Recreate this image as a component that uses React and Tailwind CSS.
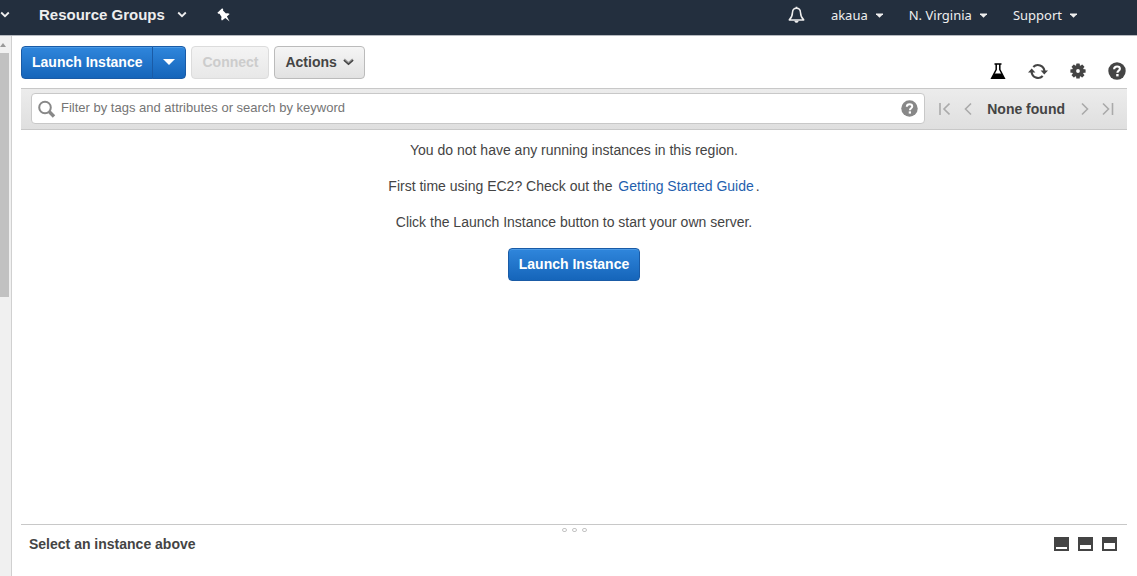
import React from "react";

function Caret({ className = "" }) {
  return (
    <svg className={className} width="7" height="5" viewBox="0 0 7 5" fill="currentColor" aria-hidden="true">
      <path d="M0 .5h7v.8L3.500 4.800 0 1.300z" />
    </svg>
  );
}

function Chevron({ className = "" }) {
  return (
    <svg className={className} width="10" height="7" viewBox="0 0 10 7" fill="none" stroke="currentColor" strokeWidth="1.800" aria-hidden="true">
      <path d="M1.200 1.500 5 5.200 8.800 1.500" />
    </svg>
  );
}

function BevelChevron() {
  return (
    <svg width="11" height="8" viewBox="0 0 11 8" fill="none" aria-hidden="true">
      <path d="M1 1.500 5.500 5.500 10 1.500" stroke="#999" strokeWidth="2.400" />
      <path d="M1 2.300 5.500 6.300 10 2.300" stroke="#444" strokeWidth="1.400" />
    </svg>
  );
}

function Pin() {
  return (
    <svg width="14" height="14" viewBox="0 0 14 14" fill="currentColor" aria-hidden="true">
      <path d="M5.200.3 6.200 1.300 6 2.600 9 5.400C10.400 4.900 11.800 5.100 12.700 6L9.900 8.500 12.600 13.400 8.300 9.900 5 12.600C4.100 11.600 4 10.200 4.600 8.900L2.500 5.700 1.300 5.800.4 4.700z" />
    </svg>
  );
}

function Bell() {
  return (
    <svg width="17" height="18" viewBox="0 0 17 18" aria-hidden="true">
      <path d="M8.5 2.2C5.9 2.2 4.6 4 4.5 6.4 4.4 9.8 3.6 11.600 1.300 13.900h14.400c-2.300-2.300-3.100-4.100-3.200-7.500C12.400 4 11.100 2.200 8.500 2.200z" fill="none" stroke="currentColor" strokeWidth="1.500" strokeLinejoin="round" />
      <path d="M7.600.7h1.800v1.800H7.600zM6.400 14.800h4.200c-.2 1.400-1 2-2.100 2s-1.900-.6-2.100-2z" fill="currentColor" />
    </svg>
  );
}

function Flask() {
  return (
    <svg width="16" height="17" viewBox="0 0 16 17" aria-hidden="true">
      <path d="M4.500 1h7M6.200 1.500v5L1.700 15.200h12.600L9.800 6.500v-5" fill="none" stroke="#000" strokeWidth="1.500" />
      <path d="M4.500 10.500h7l3 5.200h-13z" fill="#000" />
    </svg>
  );
}

function Refresh() {
  return (
    <svg width="20" height="17" viewBox="0 0 20 17" aria-hidden="true">
      <g fill="none" stroke="#444" strokeWidth="2.200">
        <path d="M5.300 4A6.500 6.500 0 0 1 16.400 8" />
        <path d="M14.700 13A6.500 6.500 0 0 1 3.600 9" />
      </g>
      <path d="M12.600 7.500H20l-3.700 4zM0 9.500h7.400L3.700 5.500z" fill="#444" />
    </svg>
  );
}

const teeth = [0, 45, 90, 135, 180, 225, 270, 315];

function Gear() {
  return (
    <svg width="16" height="16" viewBox="0 0 16 16" aria-hidden="true">
      <g fill="#444">
        {teeth.map((a) => (
          <rect key={a} x="6.200" y="0.400" width="3.600" height="4" rx="0.600" transform={`rotate(${a} 8 8)`} />
        ))}
      </g>
      <circle cx="8" cy="8" r="3.900" fill="none" stroke="#444" strokeWidth="4" />
    </svg>
  );
}

function Help({ className }) {
  return (
    <svg className={className} viewBox="0 0 18 18" aria-hidden="true">
      <circle cx="9" cy="9" r="8.700" fill="currentColor" />
      <path d="M6.100 7.200C6.200 5.200 7.400 4.500 9.100 4.500c1.700 0 2.800.9 2.800 2.300 0 1.900-2.500 1.900-2.500 4" fill="none" stroke="#fff" strokeWidth="2.100" />
      <rect x="8.200" y="12" width="2.400" height="2.400" fill="#fff" />
    </svg>
  );
}

function Magnifier() {
  return (
    <svg width="18" height="18" viewBox="0 0 18 18" fill="none" stroke="#888" aria-hidden="true">
      <circle cx="7" cy="7.500" r="5.800" strokeWidth="2" />
      <path d="m11.300 11.800 4.700 4.700" strokeWidth="3.400" />
    </svg>
  );
}

function Pager({ d, label }) {
  return (
    <button type="button" aria-label={label} className="flex">
      <svg width="12" height="14" viewBox="0 0 12 14" fill="none" stroke="#aaa" strokeWidth="1.600" aria-hidden="true">
        <path d={d} />
      </svg>
    </button>
  );
}

function PanelSize({ hole, label }) {
  return (
    <button type="button" aria-label={label} className="flex">
      <svg width="15" height="14" viewBox="0 0 15 14" aria-hidden="true">
        <rect width="15" height="14" fill="#444" />
        <rect x="2" y={12 - hole} width="11" height={hole} fill="#fff" />
      </svg>
    </button>
  );
}

const primary =
  "border border-[#1a5ba6] bg-linear-to-b from-[#2f86dc] to-[#1565ba] pb-[2px] text-sm font-bold text-white inset-shadow-[0_1px_0_#4b9ae6]";

export default function App() {
  return (
    <div className="flex h-screen flex-col overflow-hidden bg-white font-['Liberation_Sans',Arial,sans-serif] text-sm text-[#444]">
      <header className="flex h-9 shrink-0 items-center justify-between border-b border-[#b5b9bf] bg-[#232f3e] pb-[5px] text-[#eee]">
        <nav className="flex items-center">
          <button type="button" aria-label="Services" className="flex">
            <Chevron />
          </button>
          <button type="button" className="ml-[29px] flex items-center gap-3 text-[15px] font-bold">
            Resource Groups
            <Chevron />
          </button>
          <button type="button" aria-label="Pin shortcuts" className="ml-[30px] flex text-white">
            <Pin />
          </button>
        </nav>
        <nav className="flex items-center pr-[60px] font-['Noto_Sans',sans-serif] text-[13px] leading-5">
          <button type="button" aria-label="Notifications" className="mr-[26px] flex">
            <Bell />
          </button>
          <button type="button" className="mr-[26px] flex items-center gap-2">
            akaua
            <Caret />
          </button>
          <button type="button" className="mr-[26px] flex items-center gap-2">
            N. Virginia
            <Caret />
          </button>
          <button type="button" className="flex items-center gap-2">
            Support
            <Caret />
          </button>
        </nav>
      </header>

      <div className="flex min-h-0 flex-1">
        <div className="w-3 shrink-0 border-r border-[#d0d0d0] bg-[#f0f0f0]" aria-hidden="true">
          <div className="flex h-[17px] items-center">
            <svg width="7" height="4" viewBox="0 0 7 4" fill="#999">
              <path d="M0 4h6L3 0z" />
            </svg>
          </div>
          <div className="h-[244px] w-[9px] bg-[#c1c1c1]" />
        </div>

        <main className="flex min-w-0 flex-1 flex-col pr-[10px] pl-[9px]">
          <div className="flex h-[52px] shrink-0 justify-between pt-[10px]">
            <div className="flex h-[33px]">
              <button type="button" className={`${primary} rounded-l px-[10px]`}>
                Launch Instance
              </button>
              <button type="button" aria-label="More launch options" className={`${primary} -ml-px flex w-[34px] items-center justify-center rounded-r`}>
                <svg width="12" height="6" viewBox="0 0 12 6" fill="#fff" aria-hidden="true">
                  <path d="M0 0h12L6 6z" />
                </svg>
              </button>
              <button type="button" disabled className="ml-[5px] rounded border border-[#dcdcdc] bg-linear-to-b from-[#f4f4f4] to-[#e8e8e8] px-[10px] pb-[2px] font-bold text-[#ccc]">
                Connect
              </button>
              <button type="button" className="ml-[5px] flex items-center gap-[6px] rounded border border-[#bbb] bg-linear-to-b from-[#f5f5f5] to-[#e2e2e2] px-[10px] pb-[2px] font-bold text-[#444]">
                Actions
                <BevelChevron />
              </button>
            </div>
            <div className="flex h-[50px] items-center gap-[22px] pr-px">
              <button type="button" aria-label="Experiments" className="flex"><Flask /></button>
              <button type="button" aria-label="Refresh" className="flex"><Refresh /></button>
              <button type="button" aria-label="Settings" className="flex"><Gear /></button>
              <button type="button" aria-label="Help" className="flex text-[#444]"><Help className="size-[18px]" /></button>
            </div>
          </div>

          <div className="flex h-[42px] shrink-0 items-center border-y border-[#c8c8c8] bg-linear-to-b from-[#ececec] to-[#dfdfdf] pr-[13px] pb-px pl-[10px]">
            <div className="flex h-[31px] min-w-0 flex-1 items-center rounded border border-[#c8c8c8] bg-white px-[6px]">
              <Magnifier />
              <input
                type="text"
                aria-label="Filter instances"
                placeholder="Filter by tags and attributes or search by keyword"
                className="min-w-0 flex-1 px-[5px] text-[13px] outline-none placeholder:text-[#757575]"
              />
              <button type="button" aria-label="Filter help" className="flex text-[#888]"><Help className="size-[17px]" /></button>
            </div>
            <div className="ml-[13px] flex items-center gap-3">
              <Pager label="First page" d="M2 1v12M11.500 1.500 6 7l5.500 5.500" />
              <Pager label="Previous page" d="M9 1.500 3.500 7l5.500 5.500" />
              <span className="px-px font-bold">None found</span>
              <Pager label="Next page" d="M4 1.500 9.500 7 4 12.500" />
              <Pager label="Last page" d="M1 1.500 6.500 7 1 12.500M10.500 1v12" />
            </div>
          </div>

          <section className="flex min-h-0 flex-1 flex-col items-center gap-4 pt-[10px] text-center leading-5">
            <p>You do not have any running instances in this region.</p>
            <p>
              First time using EC2? Check out the{" "}
              <a href="#getting-started" className="px-[2px] text-[#1f5fae]">Getting Started Guide</a>.
            </p>
            <p>Click the Launch Instance button to start your own server.</p>
            <button type="button" className={`${primary} h-[33px] rounded px-[10px]`}>
              Launch Instance
            </button>
          </section>

          <footer className="h-[52px] shrink-0 border-t border-[#c8c8c8]">
            <div className="flex h-[9px] items-center justify-center gap-[5px] pt-px" aria-hidden="true">
              <span className="h-1 w-[5px] rounded-xs border border-[#c4c4c4]" />
              <span className="h-1 w-[5px] rounded-xs border border-[#c4c4c4]" />
              <span className="h-1 w-[5px] rounded-xs border border-[#c4c4c4]" />
            </div>
            <div className="flex items-center justify-between pr-[10px] pl-2 leading-5">
              <h2 className="font-bold">Select an instance above</h2>
              <div className="flex gap-[9px]">
                <PanelSize label="Small details panel" hole={2} />
                <PanelSize label="Medium details panel" hole={4} />
                <PanelSize label="Large details panel" hole={6} />
              </div>
            </div>
          </footer>
        </main>
      </div>
    </div>
  );
}
